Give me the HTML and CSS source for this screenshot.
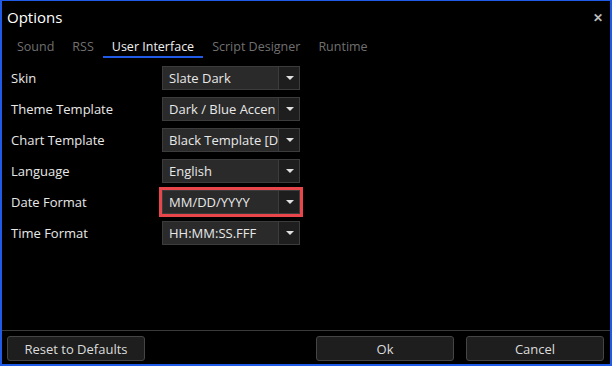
FILE: index.html
```html
<!DOCTYPE html>
<html lang="en">
<head>
    <meta charset="UTF-8">
    <title>Options</title>
    <link rel="stylesheet" href="styles.css">
</head>
<body>
    <div class="window">
        <div class="titlebar">
            <span class="title">Options</span>
            <span class="close">&#x2715;</span>
        </div>

        <div class="tabs">
            <span class="tab">Sound</span>
            <span class="tab">RSS</span>
            <span class="tab active">User Interface</span>
            <span class="tab">Script Designer</span>
            <span class="tab">Runtime</span>
        </div>

        <div class="settings">
            <div class="row">
                <label>Skin</label>
                <div class="combo"><span class="value">Slate Dark</span><span class="arrow"></span></div>
            </div>
            <div class="row">
                <label>Theme Template</label>
                <div class="combo"><span class="value">Dark / Blue Accen</span><span class="arrow"></span></div>
            </div>
            <div class="row">
                <label>Chart Template</label>
                <div class="combo"><span class="value">Black Template [D</span><span class="arrow"></span></div>
            </div>
            <div class="row">
                <label>Language</label>
                <div class="combo"><span class="value">English</span><span class="arrow"></span></div>
            </div>
            <div class="row">
                <label>Date Format</label>
                <div class="combo highlight"><span class="value">MM/DD/YYYY</span><span class="arrow"></span></div>
            </div>
            <div class="row">
                <label>Time Format</label>
                <div class="combo"><span class="value">HH:MM:SS.FFF</span><span class="arrow"></span></div>
            </div>
        </div>

        <div class="footer">
            <button>Reset to Defaults</button>
            <button class="ok">Ok</button>
            <button>Cancel</button>
        </div>
    </div>
</body>
</html>
```

FILE: styles.css
```css
body {
    margin: 0;
    background-color: #000;
    font-family: "Open Sans", "Noto Sans", sans-serif;
    font-size: 13px;
    color: #e8e8e8;
}
.window {
    width: 612px;
    height: 366px;
    box-sizing: border-box;
    border: 2px solid #1f5be6;
    border-top-width: 1px;
    display: flex;
    flex-direction: column;
}
.titlebar {
    height: 32px;
    display: flex;
    align-items: center;
    justify-content: space-between;
    padding: 0 7px 0 5px;
}
.title {
    font-size: 15px;
    color: #fff;
}
.close {
    font-size: 12px;
    font-weight: bold;
    color: #bbb;
}
.tabs {
    display: flex;
    padding-left: 6px;
    height: 25px;
}
.tab {
    padding: 5px 9px 0;
    line-height: 18px;
    color: #707070;
    font-size: 12.5px;
}
.tab.active {
    color: #f0f0f0;
    border-bottom: 2px solid #1f5be6;
}
.settings {
    flex: 1;
    padding-top: 4px;
}
.row {
    display: flex;
    align-items: center;
    height: 31px;
}
.row label {
    width: 151px;
    padding-left: 9px;
}
.combo {
    width: 138px;
    height: 24px;
    box-sizing: border-box;
    border: 1px solid #3c3c3c;
    background-color: #2a2a2a;
    display: flex;
}
.combo .value {
    flex: 1;
    padding-left: 6px;
    line-height: 22px;
    white-space: nowrap;
    overflow: hidden;
}
.combo .arrow {
    width: 20px;
    border-left: 1px solid #3c3c3c;
    background-color: #1e1e1e;
    position: relative;
}
.combo .arrow::after {
    content: "";
    position: absolute;
    left: 7px;
    top: 9px;
    border-left: 4px solid transparent;
    border-right: 4px solid transparent;
    border-top: 4px solid #e0e0e0;
}
.highlight {
    outline: 3px solid #e8464b;
}
.footer {
    border-top: 1px solid #3a3a3a;
    display: flex;
    align-items: flex-start;
    gap: 12px;
    padding: 5px 6px 0 5px;
    height: 28px;
}
button {
    width: 138px;
    height: 25px;
    background-color: #1e1e1e;
    border: 1px solid #454545;
    border-radius: 3px;
    color: #dcdcdc;
    font-family: "Open Sans", "Noto Sans", sans-serif;
    font-size: 13px;
}
button.ok {
    margin-left: auto;
}
```
